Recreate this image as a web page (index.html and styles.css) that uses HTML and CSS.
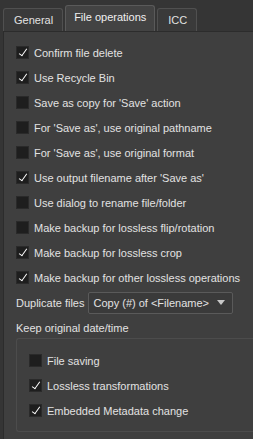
FILE: index.html
```html
<!DOCTYPE html>
<html lang="en">
<head>
    <meta charset="UTF-8">
    <title>Preferences - File operations</title>
    <link rel="stylesheet" href="styles.css">
</head>
<body>

<div class="tabs">
    <div class="tab">General</div>
    <div class="tab active">File operations</div>
    <div class="tab">ICC</div>
</div>

<div class="pane">
    <div class="row"><span class="box on"></span>Confirm file delete</div>
    <div class="row"><span class="box on"></span>Use Recycle Bin</div>
    <div class="row"><span class="box"></span>Save as copy for 'Save' action</div>
    <div class="row"><span class="box"></span>For 'Save as', use original pathname</div>
    <div class="row"><span class="box"></span>For 'Save as', use original format</div>
    <div class="row"><span class="box on"></span>Use output filename after 'Save as'</div>
    <div class="row"><span class="box"></span>Use dialog to rename file/folder</div>
    <div class="row"><span class="box"></span>Make backup for lossless flip/rotation</div>
    <div class="row"><span class="box on"></span>Make backup for lossless crop</div>
    <div class="row"><span class="box on"></span>Make backup for other lossless operations</div>

    <div class="dup">
        <span>Duplicate files</span>
        <div class="combo">
            <span>Copy (#) of &lt;Filename&gt;</span>
            <span class="arrow"></span>
        </div>
    </div>

    <div class="label">Keep original date/time</div>

    <div class="group">
        <div class="row"><span class="box"></span>File saving</div>
        <div class="row"><span class="box on"></span>Lossless transformations</div>
        <div class="row"><span class="box on"></span>Embedded Metadata change</div>
    </div>
</div>

</body>
</html>
```

FILE: styles.css
```css
body {
    margin: 0;
    width: 253px;
    height: 439px;
    overflow: hidden;
    background-color: #353535;
    font-family: "Liberation Sans", Arial, sans-serif;
    font-size: 11px;
    color: #e2e2e2;
    white-space: nowrap;
}

.tabs {
    display: flex;
    align-items: flex-end;
    gap: 2px;
    height: 31px;
    padding-left: 3px;
}

.tab {
    height: 22px;
    line-height: 22px;
    padding: 0 9px 0 10px;
    background-color: #3a3a3a;
    border: 1px solid #505050;
    border-bottom: none;
    border-radius: 3px 3px 0 0;
}

.tab.active {
    height: 25px;
    line-height: 23px;
    padding: 0 8px;
    background-color: #434343;
    border-color: #5a5a5a;
    color: #f0f0f0;
}

.pane {
    height: 408px;
    margin-left: 3px;
    background-color: #3f3f3f;
    border-top: 1px solid #2c2c2c;
    border-left: 1px solid #2c2c2c;
    padding: 8px 0 0 12px;
}

.row {
    display: flex;
    align-items: center;
    gap: 5px;
    height: 25px;
}

.box {
    width: 13px;
    height: 13px;
    box-sizing: border-box;
    background-color: #1e1e1e;
    border: 1px solid #2a2a2a;
    flex-shrink: 0;
    position: relative;
}

.box.on::after {
    content: "";
    position: absolute;
    left: 4px;
    top: 0;
    width: 3px;
    height: 8px;
    border-right: 1.5px solid #ffffff;
    border-bottom: 1.5px solid #ffffff;
    transform: rotate(35deg);
}

.dup {
    display: flex;
    align-items: center;
    gap: 4px;
    height: 25px;
}

.combo {
    display: flex;
    align-items: center;
    justify-content: space-between;
    width: 145px;
    height: 22px;
    box-sizing: border-box;
    padding: 0 7px 0 4px;
    background-color: #3a3a3a;
    border: 1px solid #5a5a5a;
    border-radius: 2px;
}

.arrow {
    width: 0;
    height: 0;
    border-left: 4px solid transparent;
    border-right: 4px solid transparent;
    border-top: 5px solid #c8c8c8;
}

.label {
    height: 23px;
    line-height: 26px;
}

.group {
    height: 94px;
    box-sizing: border-box;
    border: 1px solid #4c4c4c;
    border-right: none;
    border-radius: 3px 0 0 3px;
    padding: 9px 0 0 12px;
}
```
